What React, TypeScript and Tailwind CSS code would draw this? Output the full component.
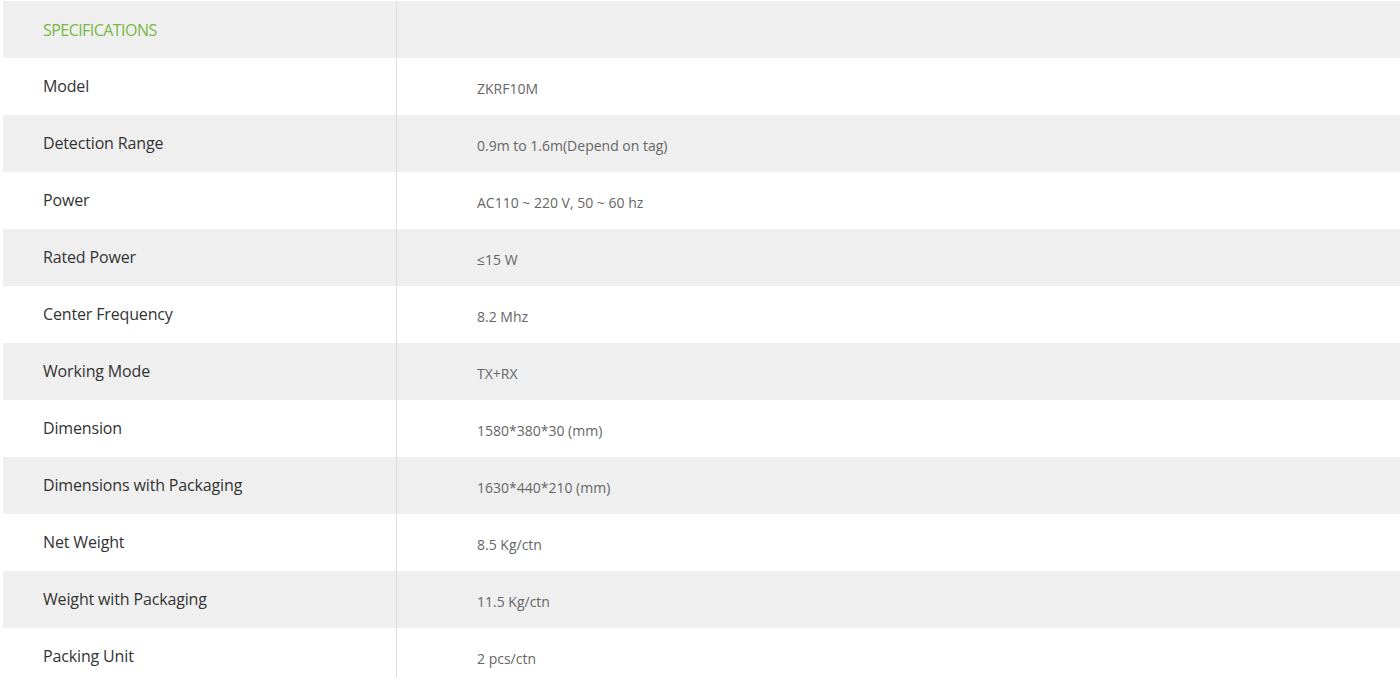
const specs: [string, string][] = [
  ['Model', 'ZKRF10M'],
  ['Detection Range', '0.9m to 1.6m(Depend on tag)'],
  ['Power', 'AC110 ~ 220 V, 50 ~ 60 hz'],
  ['Rated Power', '≤15 W'],
  ['Center Frequency', '8.2 Mhz'],
  ['Working Mode', 'TX+RX'],
  ['Dimension', '1580*380*30 (mm)'],
  ['Dimensions with Packaging', '1630*440*210 (mm)'],
  ['Net Weight', '8.5 Kg/ctn'],
  ['Weight with Packaging', '11.5 Kg/ctn'],
  ['Packing Unit', '2 pcs/ctn'],
];

export default function App() {
  return (
    <div className="min-h-screen bg-white pl-[3px] pt-px font-['Open_Sans',sans-serif]">
      <div className="grid grid-cols-[394px_1fr] h-[57px] bg-[#efefef]">
        <div className="flex items-center border-r border-[#dedede] pl-[40px]">
          <span className="text-[16px] tracking-[-0.55px] text-[#77b843]">SPECIFICATIONS</span>
        </div>
        <div />
      </div>
      {specs.map(([label, value], i) => (
        <div
          key={label}
          className={`grid grid-cols-[394px_1fr] h-[57px] ${i % 2 === 1 ? 'bg-[#efefef]' : 'bg-white'}`}
        >
          <div className="flex items-center border-r border-[#dedede] pl-[40px] pb-[2px]">
            <span className="text-[16px] tracking-[-0.15px] text-[#333]">{label}</span>
          </div>
          <div className="flex items-center pl-[80px] pt-[4px]">
            <span className="text-[14px] text-[#666]">{value}</span>
          </div>
        </div>
      ))}
    </div>
  );
}
